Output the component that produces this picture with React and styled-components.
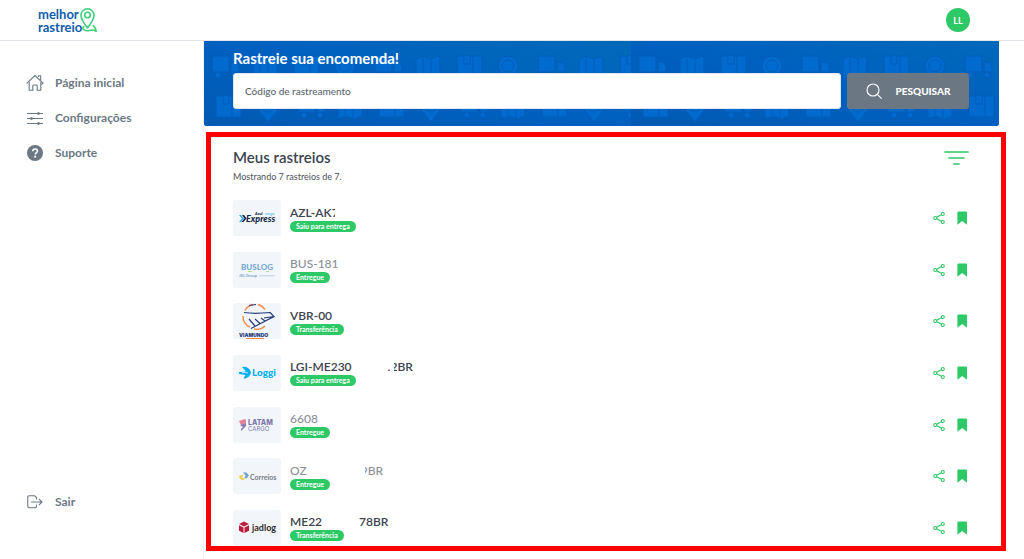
import React from 'react';
import styled, { createGlobalStyle } from 'styled-components';

const GlobalStyle = createGlobalStyle`
  * {
    box-sizing: border-box;
  }
  body {
    margin: 0;
    background: #fff;
    color: #3b4250;
    font-family: Lato, 'Open Sans', sans-serif;
  }
  button,
  input {
    font-family: inherit;
  }
`;

const Page = styled.div`
  display: flex;
  flex-direction: column;
  min-height: 100vh;
`;
const Header = styled.header`
  display: flex;
  align-items: center;
  justify-content: space-between;
  height: 41px;
  padding: 0 54px 0 36px;
  border-bottom: 1px solid #e4e5ea;
`;
const LogoLink = styled.a`
  display: flex;
`;
const Avatar = styled.button`
  width: 24px;
  height: 24px;
  padding: 0;
  border: 0;
  border-radius: 50%;
  background: #2dc967;
  color: #fff;
  font-size: 9px;
  font-weight: 700;
`;
const Body = styled.div`
  display: flex;
  flex: 1;
`;
const Sidebar = styled.nav`
  display: flex;
  flex-direction: column;
  width: 204px;
  padding: 24px 0 40px 26px;
  border-right: 1px solid #eff0f3;
`;
const NavLink = styled.a`
  display: flex;
  align-items: center;
  gap: 11px;
  height: 35px;
  margin-top: ${({ $last }) => ($last ? 'auto' : '0')};
  color: #6b7884;
  font-size: 12px;
  font-weight: 700;
  text-decoration: none;
`;
const Main = styled.main`
  display: flex;
  flex: 1;
  flex-direction: column;
  min-width: 0;
  padding: 0 18px 8px 0;
`;
const Banner = styled.section`
  position: relative;
  margin-right: 7px;
  padding: 7px 30px 17px 29px;
  border-radius: 0 0 3px 3px;
  background: #0060bd;
  overflow: hidden;
`;
const BannerArt = styled.svg`
  position: absolute;
  inset: 0;
  width: 100%;
  height: 100%;
`;
const BannerTitle = styled.h1`
  position: relative;
  margin: 0 0 5px;
  color: #fff;
  font-size: 15px;
  font-weight: 700;
  line-height: 20px;
`;
const SearchForm = styled.form`
  position: relative;
  display: flex;
  gap: 6px;
`;
const SearchInput = styled.input`
  flex: 1;
  min-width: 0;
  height: 36px;
  padding: 0 11px;
  border: 1px solid #dfe6ee;
  border-radius: 3px;
  background: #fff;
  color: #3b4250;
  font-size: 10px;
  font-weight: 500;
  &::placeholder {
    color: #5d6671;
    opacity: 1;
  }
`;
const SearchButton = styled.button`
  display: flex;
  align-items: center;
  justify-content: center;
  gap: 14px;
  width: 122px;
  padding: 0;
  border: 0;
  border-radius: 3px;
  background: #6b7884;
  color: #fff;
  font-size: 10px;
  font-weight: 900;
`;
const Panel = styled.section`
  display: flex;
  flex: 1;
  flex-direction: column;
  margin: 6px 0 0 2px;
  padding: 10px 32px 0 22px;
  border: 5px solid #f00;
`;
const PanelHead = styled.div`
  display: flex;
  align-items: flex-start;
  justify-content: space-between;
  margin-bottom: 17px;
`;
const PanelTitle = styled.h2`
  margin: 0;
  font-size: 15px;
  font-weight: 600;
  line-height: 20px;
`;
const PanelCount = styled.p`
  margin: 4px 0 0;
  color: #4b5260;
  font-size: 9px;
  line-height: 12px;
`;
const IconButton = styled.button`
  display: flex;
  padding: 0;
  border: 0;
  background: none;
  color: #2dc967;
`;
const List = styled.ul`
  display: flex;
  flex: 1;
  flex-direction: column;
  justify-content: space-between;
  gap: 8px;
  margin: 0;
  padding: 0;
  list-style: none;
`;
const Row = styled.li`
  display: flex;
  align-items: center;
  height: 36px;
`;
const Thumb = styled.div`
  width: 48px;
  height: 36px;
  margin-right: 9px;
  border-radius: 3px;
  background: #f2f5f9;
  svg {
    display: block;
    opacity: ${({ $faded }) => ($faded ? 0.6 : 1)};
  }
`;
const Info = styled.div`
  flex: 1;
`;
const Code = styled.div`
  display: flex;
  height: 16px;
  color: ${({ $faded }) => ($faded ? '#8b8f9b' : '#3b4250')};
  font-size: 12px;
  font-weight: ${({ $faded }) => ($faded ? 500 : 600)};
  line-height: 16px;
  white-space: pre;
`;
const Hidden = styled.span`
  width: ${({ $width }) => $width}px;
`;
const Sliver = styled.span`
  display: flex;
  justify-content: ${({ $side }) => ($side === 'right' ? 'flex-end' : 'flex-start')};
  width: 3px;
  overflow: hidden;
`;
const Status = styled.span`
  display: block;
  width: fit-content;
  height: 11px;
  padding: 0 6px;
  border-radius: 6px;
  background: #2dc967;
  color: #fff;
  font-size: 7px;
  font-weight: 700;
  line-height: 11px;
`;
const Actions = styled.div`
  display: flex;
  align-items: center;
  gap: 12px;
  padding-right: 2px;
`;

const Logo = () => (
  <svg width="62" height="30" viewBox="0 0 62 30" role="img" aria-label="melhor rastreio">
    <g fill="#0d5cab" fontFamily="Lato, sans-serif" fontSize="13" fontWeight="700">
      <text x="2" y="14">melhor</text>
      <text x="2" y="27">rastreio</text>
    </g>
    <g fill="none" stroke="#3fd07a" strokeWidth="1.6" strokeLinejoin="round">
      <path d="M51.500 23C49 19.500 45 15 45 10.300a6.500 6.500 0 0 1 13 0C58 15 54 19.500 51.500 23Z" />
      <circle cx="51.500" cy="10" r="2.800" />
      <path d="M48.500 21.500c-2 .6-2.200 2.200-.7 3.200 1.700 1.100 3.700 1.400 5.700.7s4.500-.2 6.700.9c-.2-1.800-1.600-4.600-3.400-6.100" />
    </g>
  </svg>
);

const HomeIcon = () => (
  <svg width="18" height="18" viewBox="0 0 18 18" fill="none" stroke="currentColor" strokeWidth="1.100" strokeLinejoin="round" strokeLinecap="round">
    <path d="M1 9.200 9 1.500l8 7.700-1.100.9M3.200 8.500v7.700h3.600v-4.400q0-.8.8-.8h2.800q.8 0 .8.800v4.400h3.600V8.500M12.500 2.500V1.800h2.200v3.700" />
  </svg>
);
const SlidersIcon = () => (
  <svg width="18" height="18" viewBox="0 0 18 18" fill="currentColor" stroke="currentColor" strokeWidth="1">
    <path d="M1 4.500h16M1 9.500h16M1 14.500h16" />
    <circle cx="12.500" cy="4.500" r="1" />
    <circle cx="5.500" cy="9.500" r="1" />
    <circle cx="12.500" cy="14.500" r="1" />
  </svg>
);
const HelpIcon = () => (
  <svg width="18" height="18" viewBox="0 0 18 18">
    <circle cx="9" cy="9" r="8" fill="#6b7884" />
    <path d="M6.700 7.300c.1-1.500 1.100-2.300 2.400-2.300s2.400.8 2.400 2c0 1.600-2.200 1.700-2.200 3.400" fill="none" stroke="#fff" strokeWidth="1.600" />
    <circle cx="9.200" cy="12.700" r="1.100" fill="#fff" />
  </svg>
);
const ExitIcon = () => (
  <svg width="18" height="18" viewBox="0 0 18 18" fill="none" stroke="currentColor" strokeWidth="1.100" strokeLinejoin="round" strokeLinecap="round">
    <path d="M10.500 6V4.500L8.800 2.800H3q-1.200 0-1.200 1.200v9.600q0 1.200 1.200 1.200h6.300q1.200 0 1.200-1.200V12M5.500 9H16M13.300 6.300 16 9l-2.700 2.700" />
  </svg>
);
const SearchIcon = () => (
  <svg width="16" height="16" viewBox="0 0 16 16" fill="none" stroke="currentColor" strokeWidth="1.100" strokeLinecap="round">
    <circle cx="7" cy="7" r="6" />
    <path d="m11.300 11.300 4 4" />
  </svg>
);
const FilterIcon = () => (
  <svg width="26" height="20" viewBox="0 0 26 20" stroke="currentColor" strokeWidth="1.700" strokeLinecap="round">
    <path d="M2 5h23M6 11h15M11 17h5" />
  </svg>
);
const ShareIcon = () => (
  <svg width="12" height="14" viewBox="0 0 12 14" fill="none" stroke="currentColor" strokeWidth="1.100">
    <circle cx="2.200" cy="7" r="1.500" />
    <circle cx="9.800" cy="3" r="1.500" />
    <circle cx="9.800" cy="11" r="1.500" />
    <path d="m3.600 6.300 4.800-2.600M3.600 7.700l4.800 2.600" />
  </svg>
);
const BookmarkIcon = () => (
  <svg width="10" height="14" viewBox="0 0 10 14" fill="currentColor">
    <path d="M.4 1.600Q.4.500 1.600.5h7.200q1.200 0 1.200 1.100v12.100L5.200 10 .4 13.700Z" />
  </svg>
);

const TruckShape = ({ x, y }) => (
  <g transform={`translate(${x} ${y})`}>
    <path d="M0 0h17v16H0ZM19 6h5l3 4v6h-8Z" />
    <circle cx="6" cy="19" r="3" />
    <circle cx="22" cy="19" r="3" />
  </g>
);
const MapShape = ({ x, y }) => (
  <g transform={`translate(${x} ${y})`}>
    <path d="m0 3 7-3 8 3 7-3 2 2v18l-8 3-8-3-8 3Z" />
    <path d="M7 0v19M15 3v19" />
  </g>
);
const BoxShape = ({ x, y }) => (
  <g transform={`translate(${x} ${y})`}>
    <path d="M0 0h25v21H0Z" />
    <path d="M7 0v8h6V0M16 0v21" />
  </g>
);
const PinShape = ({ x, y }) => (
  <g transform={`translate(${x} ${y})`}>
    <path d="M11 26C6 19 1 15 1 10a10 10 0 0 1 20 0c0 5-5 9-10 16Z" />
    <circle cx="11" cy="10" r="6" />
  </g>
);

const topShapes = [TruckShape, MapShape, BoxShape, PinShape];
const bottomShapes = [BoxShape, PinShape, TruckShape, MapShape];

const BannerPattern = () => (
  <BannerArt aria-hidden="true">
    <defs>
      <linearGradient id="bannerFill" x1="0" y1="1" x2="1" y2="0">
        <stop offset="0" stopColor="#005ab2" />
        <stop offset="0.5" stopColor="#0060c0" />
        <stop offset="1" stopColor="#006ab8" />
      </linearGradient>
      <pattern id="bannerTile" width="427" height="86" patternUnits="userSpaceOnUse">
        <rect width="427" height="86" fill="url(#bannerFill)" />
        <g fill="#006acf" stroke="#005cb8" strokeWidth="1">
          {[...Array(11).keys()].map((i) => {
            const Top = topShapes[i % 4];
            const Bottom = bottomShapes[i % 4];
            const x = 8 + Math.round(i * 40.75);
            return (
              <g key={i}>
                <Top x={x} y={15} />
                <Bottom x={x + 4} y={55} />
              </g>
            );
          })}
        </g>
      </pattern>
    </defs>
    <rect width="100%" height="100%" fill="url(#bannerTile)" />
  </BannerArt>
);

const AzulLogo = () => (
  <svg width="48" height="36" viewBox="0 0 48 36" fontFamily="Lato, sans-serif" fontStyle="italic" fontWeight="900">
    <path d="m6 15 3 3.500L6 22h2l3-3.500L8 15Z" fill="#35a9dc" />
    <path d="m9 15 2.500 3.500L8.500 22h2l3-3.500L11 15Z" fill="#14284b" />
    <text x="13" y="22" fontSize="9" fill="#14284b">Express</text>
    <text x="22" y="15" fontSize="4" fill="#14284b">Azul</text>
    <text x="32" y="15" fontSize="4" fill="#6fc7ea">cargo</text>
  </svg>
);
const BuslogLogo = () => (
  <svg width="48" height="36" viewBox="0 0 48 36" fontFamily="Lato, sans-serif">
    <text x="8" y="18" fontSize="8" fontWeight="900" fill="#1f78bd">BUSLOG</text>
    <path d="M15 19.500h4M33 19.500h3" stroke="#8bcf3d" strokeWidth="1.200" />
    <text x="6" y="25" fontSize="4" fontWeight="700" fill="#2b6fa8">JSL Group</text>
    <path d="M26 23.800h16" stroke="#9dbdd8" strokeWidth="1" />
  </svg>
);
const ViaMundoLogo = () => (
  <svg width="48" height="36" viewBox="0 0 48 36" fill="none">
    <g stroke="#f58a4b" strokeWidth="1.400">
      <path d="M20 1.500a12 12 0 0 0-8 6M10 13a12 12 0 0 0 7 11M21 26a12 12 0 0 0 11-3M25 1.500a12 12 0 0 1 7 5" />
    </g>
    <g stroke="#273f7d" strokeWidth="1.200">
      <path d="M11 9.500c9 1.500 18 .8 26 0l4 4-23 12M37 9.500 41 13.500 31 15M16 16l6 7M22 16l5 4.500M28 15l4 3M16 2.500l7-1" />
    </g>
    <text x="6" y="34" fontFamily="Inter, sans-serif" fontSize="5" fontWeight="900" fill="#273f7d">VIAMUNDO</text>
    <path d="M13 35.500h18" stroke="#f58a4b" strokeWidth="1" />
  </svg>
);
const LoggiLogo = () => (
  <svg width="48" height="36" viewBox="0 0 48 36">
    <path d="M9 12c5-1 8 2 9 5.500-1 3.500-3 6-7.500 6l2-3.500-6.500-1v-2l7-.5Z" fill="#00b0f5" />
    <path d="m9 17.500 6 .3" stroke="#f2f5f9" strokeWidth="0.800" />
    <text x="19" y="21" fontFamily="Lato, sans-serif" fontSize="10" fontWeight="900" fill="#00b0f5">Loggi</text>
  </svg>
);
const LatamLogo = () => (
  <svg width="48" height="36" viewBox="0 0 48 36" fontFamily="Inter, sans-serif">
    <path d="m6 14 6-2 1 1v3l-5 2Z" fill="#e2325a" />
    <path d="m7 18 6-2v3l-5 5v-2l2-2Z" fill="#3a2c85" />
    <text x="15" y="18" fontSize="7" fontWeight="800" fill="#2f2379">LATAM</text>
    <text x="15" y="24" fontSize="6" fill="#2f2379">CARGO</text>
  </svg>
);
const CorreiosLogo = () => (
  <svg width="48" height="36" viewBox="0 0 48 36">
    <path d="m6 18 4-1.500v1.500l-1 1 3.500 2L10 22c-2.500 0-4-2-4-4Z" fill="#f7b500" />
    <path d="m10 14.500h3.500l2.500 3-2.500 3-2-.5 1-2.500Z" fill="#1673a8" />
    <text x="17" y="22" fontFamily="Lato, sans-serif" fontSize="7" fontWeight="700" fill="#1d2735">Correios</text>
  </svg>
);
const JadlogLogo = () => (
  <svg width="48" height="36" viewBox="0 0 48 36">
    <path d="m6 14 5-2.500 5 2.500-5 2.500ZM6 15.200l4.500 2.300V23L6 20.700ZM16 15.200l-4.500 2.300V23l4.500-2.300Z" fill="#b81d3c" />
    <text x="19" y="21" fontFamily="Lato, sans-serif" fontSize="9" fontWeight="700" fill="#2d2a2b">jadlog</text>
  </svg>
);

const parcels = [
  { id: 'azul', logo: AzulLogo, code: <>AZL-AK<Sliver>7</Sliver></>, status: 'Saiu para entrega' },
  { id: 'buslog', logo: BuslogLogo, code: 'BUS-181', status: 'Entregue', done: true },
  { id: 'viamundo', logo: ViaMundoLogo, code: 'VBR-00', status: 'Transferência' },
  {
    id: 'loggi',
    logo: LoggiLogo,
    code: <>LGI-ME230<Hidden $width={36} />.<Hidden $width={4} /><Sliver $side="right">2</Sliver>BR</>,
    status: 'Saiu para entrega',
  },
  { id: 'latam', logo: LatamLogo, code: '6608', status: 'Entregue', done: true },
  {
    id: 'correios',
    logo: CorreiosLogo,
    code: <>OZ<Hidden $width={58} /><Sliver $side="right">9</Sliver>BR</>,
    status: 'Entregue',
    done: true,
  },
  { id: 'jadlog', logo: JadlogLogo, code: <>ME22<Hidden $width={37} />78BR</>, status: 'Transferência' },
];

const Parcel = ({ parcel }) => {
  const Carrier = parcel.logo;
  return (
    <Row>
      <Thumb $faded={parcel.done}>
        <Carrier />
      </Thumb>
      <Info>
        <Code $faded={parcel.done}>{parcel.code}</Code>
        <Status>{parcel.status}</Status>
      </Info>
      <Actions>
        <IconButton type="button" aria-label="Compartilhar">
          <ShareIcon />
        </IconButton>
        <IconButton type="button" aria-label="Favoritar">
          <BookmarkIcon />
        </IconButton>
      </Actions>
    </Row>
  );
};

const App = () => {
  return (
    <Page>
      <GlobalStyle />
      <Header>
        <LogoLink href="#">
          <Logo />
        </LogoLink>
        <Avatar type="button">LL</Avatar>
      </Header>
      <Body>
        <Sidebar>
          <NavLink href="#">
            <HomeIcon />
            Página inicial
          </NavLink>
          <NavLink href="#">
            <SlidersIcon />
            Configurações
          </NavLink>
          <NavLink href="#">
            <HelpIcon />
            Suporte
          </NavLink>
          <NavLink href="#" $last>
            <ExitIcon />
            Sair
          </NavLink>
        </Sidebar>
        <Main>
          <Banner>
            <BannerPattern />
            <BannerTitle>Rastreie sua encomenda!</BannerTitle>
            <SearchForm onSubmit={(e) => e.preventDefault()}>
              <SearchInput type="text" aria-label="Código de rastreamento" placeholder="Código de rastreamento" />
              <SearchButton type="submit">
                <SearchIcon />
                PESQUISAR
              </SearchButton>
            </SearchForm>
          </Banner>
          <Panel>
            <PanelHead>
              <div>
                <PanelTitle>Meus rastreios</PanelTitle>
                <PanelCount>Mostrando 7 rastreios de 7.</PanelCount>
              </div>
              <IconButton type="button" aria-label="Filtrar">
                <FilterIcon />
              </IconButton>
            </PanelHead>
            <List>
              {parcels.map((parcel) => (
                <Parcel key={parcel.id} parcel={parcel} />
              ))}
            </List>
          </Panel>
        </Main>
      </Body>
    </Page>
  );
};

export default App;
